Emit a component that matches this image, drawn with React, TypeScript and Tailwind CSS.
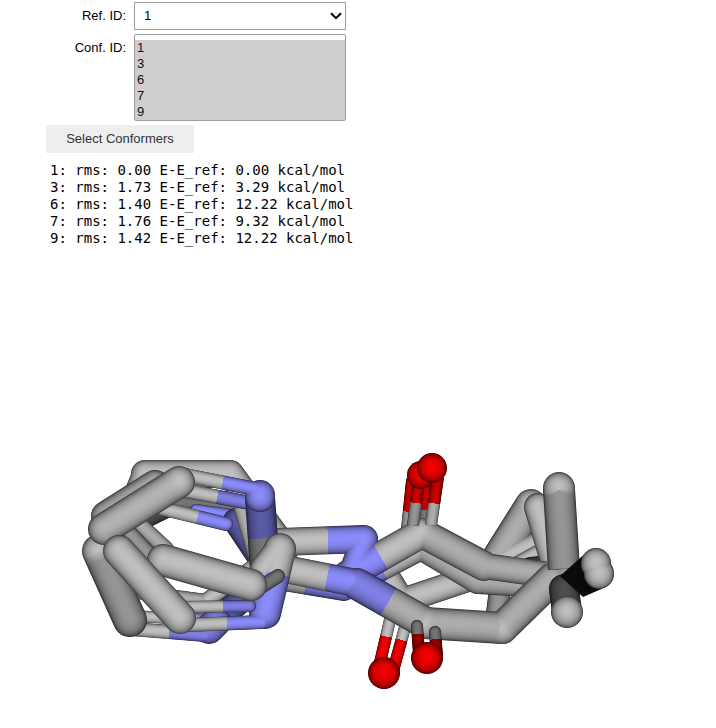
import { useId } from "react";

const CONFORMERS = ["1", "3", "6", "7", "9"];

const RESULTS = [
  "1: rms: 0.00 E-E_ref: 0.00 kcal/mol",
  "3: rms: 1.73 E-E_ref: 3.29 kcal/mol",
  "6: rms: 1.40 E-E_ref: 12.22 kcal/mol",
  "7: rms: 1.76 E-E_ref: 9.32 kcal/mol",
  "9: rms: 1.42 E-E_ref: 12.22 kcal/mol",
];

type Rgb = [number, number, number];

const C: Rgb = [192, 192, 192];
const CM: Rgb = [174, 174, 174];
const CT: Rgb = [150, 150, 150];
const CD: Rgb = [118, 118, 118];
const CK: Rgb = [78, 78, 78];
const K: Rgb = [10, 10, 10];
const N: Rgb = [140, 140, 252];
const NM: Rgb = [128, 128, 232];
const ND: Rgb = [90, 90, 168];
const O: Rgb = [244, 0, 0];
const OM: Rgb = [200, 0, 0];
const OD: Rgb = [150, 0, 0];

// Distances from the axis, outermost first; each gets one stroke.
const LAYERS = [1, 0.97, 0.93, 0.88, 0.82, 0.75, 0.67, 0.59, 0.5, 0.41, 0.32, 0.22, 0.12];

const light = (d: number) => Math.max(0.3, Math.pow(1 - d * d, 0.31));

const tone = (c: Rgb, f: number) =>
  `rgb(${c.map((v) => Math.round(v * f)).join(",")})`;

type Bond = {
  a: [number, number];
  b: [number, number];
  r: number;
  c?: Rgb;
  to?: Rgb;
  split?: number;
  capA?: Rgb;
  butt?: boolean;
};

// Bonds of one group are shaded layer by layer, so that their joints blend.
function Bonds({ of }: { of: Bond[] }) {
  const id = useId();
  return (
    <g>
      {LAYERS.map((d, i) =>
        of.map(({ a, b, r, c = C, to = c, split = 0.5, capA, butt }, j) => {
          const f = light(d);
          const up = (1 - d) * r * 0.12;
          return (
            <g key={`${i}-${j}`}>
              <linearGradient
                id={`${id}-${i}-${j}`}
                gradientUnits="userSpaceOnUse"
                x1={a[0]}
                y1={a[1]}
                x2={b[0]}
                y2={b[1]}
              >
                <stop offset={0} stopColor={tone(capA ?? c, f)} />
                <stop offset={capA ? 0.12 : 0} stopColor={tone(c, f)} />
                <stop offset={split} stopColor={tone(c, f)} />
                <stop offset={split} stopColor={tone(to, f)} />
              </linearGradient>
              <path
                d={`M${a[0]} ${a[1] - up}L${b[0]} ${b[1] - up + 0.01}`}
                stroke={`url(#${id}-${i}-${j})`}
                strokeWidth={2 * r * d}
                strokeLinecap={butt ? "butt" : "round"}
              />
            </g>
          );
        }),
      )}
    </g>
  );
}

function Atom({ x, y, r, c }: { x: number; y: number; r: number; c: Rgb }) {
  return (
    <>
      {LAYERS.map((d) => (
        <circle key={d} cx={x} cy={y - (1 - d) * r * 0.12} r={r * d} fill={tone(c, light(d))} />
      ))}
    </>
  );
}

function Molecule() {
  return (
    <svg viewBox="0 246 716 482" className="block w-full" role="img" aria-label="Aligned conformers">
      {/* rings, far side */}
      <Bonds
        of={[
          { a: [145, 473], b: [122, 530], r: 13 },
          { a: [230, 473], b: [285, 548], r: 14 },
          { a: [145, 473], b: [230, 473], r: 14 },
        ]}
      />
      <Bonds of={[{ a: [155, 484], b: [106, 515], r: 15, c: CM }]} />
      <Bonds of={[{ a: [170, 505], b: [140, 520], r: 10, c: CK }]} />
      <Bonds of={[{ a: [160, 500], b: [246, 507], r: 7, c: CD }]} />
      <Bonds of={[{ a: [196, 509], b: [230, 514], r: 6, c: N }]} />
      <Bonds of={[{ a: [236, 520], b: [266, 565], r: 13, c: ND, to: CD, split: 0.8 }]} />
      <Bonds of={[{ a: [160, 507], b: [226, 523], r: 7, to: N, split: 0.57 }]} />
      <Bonds of={[{ a: [242, 508], b: [258, 562], r: 8, c: CM }]} />
      <Bonds of={[{ a: [138, 522], b: [166, 548], r: 8, c: CM }]} />
      <Bonds of={[{ a: [126, 530], b: [154, 560], r: 9, c: CT }]} />
      <Bonds of={[{ a: [112, 525], b: [104, 546], r: 15, c: CD }]} />
      <Bonds of={[{ a: [130, 590], b: [206, 600], r: 7, c: CM }, { a: [206, 600], b: [262, 560], r: 8 }]} />
      <Bonds of={[{ a: [218, 618], b: [240, 600], r: 13, c: ND }]} />
      <Bonds of={[{ a: [130, 615], b: [214, 619], r: 6, to: N, split: 0.8 }]} />
      <Bonds of={[{ a: [132, 628], b: [206, 634], r: 7, to: NM, split: 0.5 }, { a: [209, 628], b: [216, 621], r: 15, c: NM }]} />

      {/* centre, far side */}
      <Bonds of={[{ a: [284, 577], b: [344, 587], r: 13, c: CM, to: NM, split: 0.37 }]} />
      <Bonds of={[{ a: [393, 606], b: [378, 670], r: 6, to: O, split: 0.46 }]} />
      <Bonds of={[{ a: [410, 608], b: [393, 670], r: 6, to: O, split: 0.5 }]} />
      <Bonds of={[{ a: [501, 580], b: [497, 612], r: 11, c: CT }]} />
      <Bonds
        of={[
          { a: [531, 504], b: [492, 566], r: 16, c: CM, capA: C },
          { a: [494, 561], b: [542, 540], r: 11 },
        ]}
      />
      <Bonds of={[{ a: [516, 564], b: [545, 548], r: 8 }]} />
      <Bonds of={[{ a: [531, 568], b: [552, 566], r: 12, c: CK }]} />
      <Bonds of={[{ a: [538, 506], b: [556, 566], r: 14, c: C }]} />
      <Bonds
        of={[
          { a: [374, 556], b: [402, 602], r: 14 },
          { a: [402, 600], b: [486, 572], r: 13 },
        ]}
      />

      <Bonds of={[{ a: [406, 528], b: [411, 480], r: 5, c: CT, to: OM, split: 0.36 }]} />
      <Bonds of={[{ a: [423, 528], b: [427, 480], r: 5, c: CD, to: OM, split: 0.4 }]} />
      <Bonds
        of={[
          { a: [352, 581], b: [421, 545], r: 14, c: N, to: C, split: 0.42 },
          { a: [421, 545], b: [478, 579], r: 14, c: CM },
          { a: [478, 579], b: [560, 584], r: 14, c: CM },
        ]}
      />
      <Bonds
        of={[
          { a: [280, 541], b: [364, 538], r: 14, to: N, split: 0.57 },
          { a: [364, 538], b: [350, 576], r: 13, c: N },
          { a: [348, 574], b: [422, 532], r: 15, c: N, to: C, split: 0.44 },
          { a: [422, 532], b: [484, 565], r: 15, c: CM, capA: C },
          { a: [484, 565], b: [556, 575], r: 13, c: CM },
        ]}
      />
      <Bonds of={[{ a: [413, 524], b: [419, 480], r: 6, c: CT, to: OM, split: 0.5, butt: true }]} />
      <Atom x={421} y={474} r={14} c={O} />
      <Bonds of={[{ a: [431, 524], b: [438, 476], r: 6, c: CM, to: OM, split: 0.45, butt: true }]} />
      <Atom x={432} y={467} r={15} c={O} />

      {/* chain on the near side */}
      <Bonds
        of={[
          { a: [280, 567], b: [356, 582], r: 14, to: N, split: 0.62 },
          { a: [357, 583], b: [424, 621], r: 16, c: NM, to: CM, split: 0.47 },
          { a: [425, 622], b: [502, 627], r: 16, c: CM, capA: C },
          { a: [502, 627], b: [552, 578], r: 16, c: CM, capA: C },
        ]}
      />
      <path d="M546 562L578 560L564 574Z" fill={tone(CT, 1)} />
      <Bonds of={[{ a: [559, 488], b: [564, 568], r: 16, c: CT, butt: true }, { a: [559, 487], b: [559, 489], r: 16 }]} />
      <Bonds of={[{ a: [564, 588], b: [567, 611], r: 15, c: CK }]} />
      <path d="M560 575L588 550L606 586L583 596Z" fill={tone(K, 1)} />
      <Bonds of={[{ a: [596, 562], b: [596, 563], r: 15 }, { a: [599, 572], b: [599, 573], r: 15 }]} />
      <Atom x={567} y={611} r={16} c={C} />

      {/* oxygens */}
      <Atom x={384} y={672} r={16} c={O} />
      <Bonds of={[{ a: [417, 625], b: [419, 652], r: 6, c: CD, to: OD, split: 0.3 }]} />
      <Bonds of={[{ a: [435, 631], b: [437, 655], r: 6, c: CD, to: OD, split: 0.3 }]} />
      <Atom x={427} y={657} r={16} c={O} />

      {/* rings, near side */}
      <Bonds of={[{ a: [182, 489], b: [250, 502], r: 7, to: NM, split: 0.52 }]} />
      <Bonds of={[{ a: [260, 496], b: [265, 570], r: 15, c: ND, to: CD, split: 0.56, capA: N }]} />
      <Bonds
        of={[
          { a: [185, 474], b: [256, 488], r: 7, to: N, split: 0.53 },
          { a: [260, 494], b: [260, 496], r: 15, c: N },
        ]}
      />
      <Bonds of={[{ a: [99, 550], b: [130, 619], r: 17, c: CT, capA: C }]} />
      <Bonds of={[{ a: [179, 481], b: [104, 528], r: 16, c: [180, 180, 180], capA: C }]} />
      <Bonds
        of={[
          { a: [280, 547], b: [264, 568], r: 14 },
          { a: [280, 548], b: [265, 612], r: 16, to: N, split: 0.38 },
          { a: [186, 624], b: [262, 621], r: 7, to: N, split: 0.54 },
        ]}
      />
      <Bonds of={[{ a: [182, 606], b: [250, 605], r: 6, to: NM, split: 0.6 }]} />
      <Bonds of={[{ a: [258, 588], b: [278, 575], r: 7, c: CD }]} />
      <Bonds of={[{ a: [163, 559], b: [251, 584], r: 16 }]} />
      <Bonds of={[{ a: [119, 550], b: [180, 617], r: 16 }]} />
    </svg>
  );
}

export default function App() {
  return (
    <main className="bg-white font-['Liberation_Sans',Arial,sans-serif] text-[13px] text-black">
      <form className="flex flex-col gap-1 pt-[2px] pl-[46px]" onSubmit={(e) => e.preventDefault()}>
        <div className="flex gap-2">
          <label htmlFor="ref" className="w-20 text-right leading-7">
            Ref. ID:
          </label>
          <div className="relative w-[212px]">
            <select
              id="ref"
              defaultValue="1"
              className="block h-7 w-full appearance-none border border-[#9e9e9e] bg-white pl-[9px]"
            >
              {CONFORMERS.map((id) => (
                <option key={id}>{id}</option>
              ))}
            </select>
            <svg
              viewBox="0 0 12 8"
              className="pointer-events-none absolute top-[10px] right-1 h-2 w-3"
              fill="none"
              stroke="black"
              strokeWidth="2"
              aria-hidden="true"
            >
              <path d="M1 1.2L6 6.2L11 1.2" />
            </svg>
          </div>
        </div>
        <div className="flex gap-2">
          <label htmlFor="conf" className="w-20 text-right leading-7">
            Conf. ID:
          </label>
          <select
            id="conf"
            multiple
            size={5}
            defaultValue={CONFORMERS}
            className="block w-[212px] overflow-hidden rounded-xs border border-[#9e9e9e] bg-white pt-[5px] leading-4"
          >
            {CONFORMERS.map((id) => (
              <option key={id} className="h-4 min-h-4 px-[2px] py-0 leading-4">
                {id}
              </option>
            ))}
          </select>
        </div>
        <button type="submit" className="h-7 w-[148px] bg-[#eeeeee] text-[#333333]">
          Select Conformers
        </button>
      </form>
      <pre className="pt-[9px] pl-[50px] font-['DejaVu_Sans_Mono',monospace] text-[14px] leading-[17px]">
        {RESULTS.join("\n")}
      </pre>
      <Molecule />
    </main>
  );
}
